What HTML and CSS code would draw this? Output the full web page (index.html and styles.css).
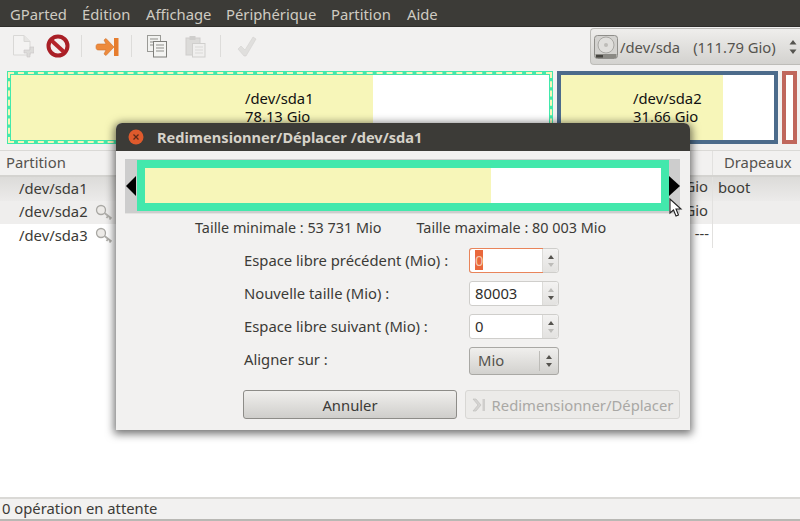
FILE: index.html
```html
<!DOCTYPE html>
<html lang="fr">
<head>
<meta charset="utf-8">
<title>GParted</title>
<link rel="stylesheet" href="styles.css">
</head>
<body>
<div class="app">
  <nav class="menubar">
    <span class="m1">GParted</span><span class="m2">Édition</span><span class="m3">Affichage</span><span class="m4">Périphérique</span><span class="m5">Partition</span><span class="m6">Aide</span>
  </nav>
  <div class="toolbar">
    <div class="tools">
      <svg class="tool t-new" width="22" height="26" viewBox="0 0 22 26"><path d="M1.500 1.500H12L18 7.500V21H1.500Z" fill="#f4f3f2" stroke="#d9d8d6"/><path d="M12 1.500V7.500H18" fill="#e6e5e3" stroke="#d9d8d6"/><path d="M15 16h3v-3h4v3h0v3h-4v4h-3v-4h-3v-3z" fill="#dddcda" stroke="#c9c8c6" stroke-width=".6"/></svg>
      <svg class="tool t-del" width="24" height="24" viewBox="0 0 24 24"><circle cx="12" cy="12" r="9.500" fill="#f3eeee" stroke="#a91f26" stroke-width="4"/><path d="M5.500 6.500L18 18" stroke="#b5232a" stroke-width="4"/></svg>
      <i class="sep s1"></i>
      <svg class="tool t-res" width="24" height="20" viewBox="0 0 24 20"><path d="M1 10C1 7.500 2 7 4 7H11L9 3 11 1.500l8 8.500-8 8.500L9 17l2-4H4C2 13 1 12.500 1 10Z" fill="#ed8a3c" stroke="#d0702a" stroke-width=".6"/><rect x="19" y="1" width="4.500" height="18" fill="#e67d2e"/></svg>
      <i class="sep s2"></i>
      <svg class="tool t-copy" width="22" height="24" viewBox="0 0 22 24"><rect x="1.500" y="1.500" width="13" height="16" fill="#f2f2f0" stroke="#9a9a96"/><path d="M4 5h8M4 8h8M4 11h8" stroke="#8f8f8b"/><rect x="7.500" y="7.500" width="13" height="15.500" fill="#f4f4f2" stroke="#7f7f7b"/><path d="M10 11h8M10 14h8M10 17h8" stroke="#8f8f8b"/></svg>
      <svg class="tool t-paste" width="21" height="23" viewBox="0 0 21 23"><rect x="1" y="3" width="14" height="17" fill="#dcdbd9" stroke="#cfcecc"/><rect x="4.500" y="1" width="6" height="4" fill="#cfcecc"/><rect x="7.500" y="8.500" width="12.500" height="13.500" fill="#f0efee" stroke="#d0cfcd"/><path d="M10 12h8M10 15h8M10 18h8" stroke="#dad9d7"/></svg>
      <i class="sep s3"></i>
      <svg class="tool t-ok" width="20" height="22" viewBox="0 0 20 22"><path d="M1 13l3-3 4 4L16 1l3 2-10 17h-2z" fill="#e0dfdd" stroke="#d3d2d0" stroke-width=".6"/></svg>
    </div>
    <div class="disk">
      <svg width="26" height="26" viewBox="0 0 26 26"><rect x="1.500" y="1.500" width="23" height="23" rx="3" fill="#d3d2cf" stroke="#8f8e8a"/><circle cx="13" cy="11" r="8" fill="#e0dfdc" stroke="#a9a8a4"/><circle cx="13" cy="11" r="2" fill="#bdbcb8"/><path d="M2.500 20H23.500V23a1 1 0 0 1-1 1H3.500a1 1 0 0 1-1-1Z" fill="#8a8984"/><rect x="3" y="21" width="7" height="2.500" fill="#45443f"/></svg>
      <span class="disk-name">/dev/sda</span><span class="disk-size">(111.79 Gio)</span>
      <svg class="updown" width="8" height="16" viewBox="0 0 8 16"><path d="M4 1L7.500 5.500H.5ZM4 15L.5 10.500H7.500Z" fill="#55544f"/></svg>
    </div>
  </div>
  <div class="graph">
    <div class="part p1"><div class="used u1"></div><div class="plabel l1">/dev/sda1<br>78.13 Gio</div></div>
    <div class="part p2"><div class="used u2"></div><div class="plabel l2">/dev/sda2<br>31.66 Gio</div></div>
    <div class="part p3"></div>
  </div>
  <div class="table">
    <div class="row head"><span class="c1">Partition</span><span class="c2"></span><span class="c3">Drapeaux</span></div>
    <div class="row sel"><span class="c1 in">/dev/sda1</span><span class="c2">Gio</span><span class="c3">boot</span></div>
    <div class="row alt"><span class="c1 in">/dev/sda2<svg class="key" width="18" height="17" viewBox="0 0 18 17"><circle cx="6" cy="6" r="4.500" fill="#eceae7" stroke="#a9a8a4" stroke-width="1.300"/><path d="M9.500 9l7 5.500M13 12l-1.500 2M15.500 14l-1 1.500" stroke="#b0afab" stroke-width="1.800" fill="none"/></svg></span><span class="c2">Gio</span><span class="c3"></span></div>
    <div class="row"><span class="c1 in">/dev/sda3<svg class="key" width="18" height="17" viewBox="0 0 18 17"><circle cx="6" cy="6" r="4.500" fill="#eceae7" stroke="#a9a8a4" stroke-width="1.300"/><path d="M9.500 9l7 5.500M13 12l-1.500 2M15.500 14l-1 1.500" stroke="#b0afab" stroke-width="1.800" fill="none"/></svg></span><span class="c2 dash">---</span><span class="c3"></span></div>
  </div>
  <footer class="status">0 opération en attente</footer>
</div>

<section class="dialog">
  <header class="titlebar">
    <svg width="16" height="16" viewBox="0 0 16 16"><circle cx="8" cy="8" r="7.500" fill="#df5a2c"/><path d="M5.500 5.500l5 5M10.500 5.500l-5 5" stroke="#5e2a18" stroke-width="1.300"/></svg>
    <span>Redimensionner/Déplacer /dev/sda1</span>
  </header>
  <div class="resizer">
    <i class="handle left"></i>
    <div class="frame"><div class="frame-used"></div></div>
    <i class="handle right"></i>
  </div>
  <div class="limits"><span>Taille minimale : 53 731 Mio</span><span>Taille maximale : 80 003 Mio</span></div>
  <div class="form">
    <label>Espace libre précédent (Mio) :</label>
    <div class="spin focus"><span class="val"><mark>0</mark></span><span class="arrows"><b class="up"></b><b class="down off"></b></span></div>
    <label>Nouvelle taille (Mio) :</label>
    <div class="spin"><span class="val">80003</span><span class="arrows"><b class="up off"></b><b class="down"></b></span></div>
    <label>Espace libre suivant (Mio) :</label>
    <div class="spin"><span class="val">0</span><span class="arrows"><b class="up"></b><b class="down off"></b></span></div>
    <label>Aligner sur :</label>
    <div class="select"><span class="val">Mio</span><span class="arrows"><b class="up dark"></b><b class="down dark"></b></span></div>
  </div>
  <div class="buttons">
    <button class="btn" type="button">Annuler</button>
    <button class="btn off" type="button"><svg width="14" height="14" viewBox="0 0 14 14"><path d="M1 1l5 6-5 6h3l5-6-5-6z" fill="#d5d4d2" stroke="#bdbcba" stroke-width=".6"/><rect x="10.500" y="1" width="2.500" height="12" fill="#cfcecc"/></svg>Redimensionner/Déplacer</button>
  </div>
</section>
<svg class="cursor" width="14" height="20" viewBox="0 0 14 20"><path d="M1 1v14l3.500-3 2.500 6 2.500-1-2.500-6h5z" fill="#fff" stroke="#222" stroke-width="1.100"/></svg>
</body>
</html>
```

FILE: styles.css
```css
* { box-sizing: border-box; }
html, body { margin: 0; height: 100%; }
body {
  width: 800px; height: 521px; overflow: hidden; position: relative;
  background: #fff; color: #3c3b37;
  font: 14.800px/18px "Noto Sans", "Open Sans", sans-serif;
}
.app { display: flex; flex-direction: column; height: 521px; }

.menubar { height: 27px; flex: none; display: flex; align-items: center; padding: 2px 0 0 10px; background: #3c3b37; color: #cfcbc2; border-bottom: 1px solid #2f2e2b; }
.menubar span { display: block; }
.m1 { width: 72px; } .m2 { width: 64px; } .m3 { width: 80px; } .m4 { width: 105px; } .m5 { width: 76px; }

.toolbar { height: 44px; flex: none; display: flex; justify-content: space-between; background: #f2f1f0; }
.tools { display: flex; align-items: flex-start; padding: 7px 0 0 12px; }
.tool { flex: none; display: block; }
.t-new { margin-right: 12px; }
.t-del { margin-right: 11px; }
.sep { display: block; width: 1px; height: 22px; background: #dddcda; margin-top: 1px; }
.s1 { margin-right: 13px; }
.t-res { margin-top: 3px; margin-right: 12px; }
.s2 { margin-right: 14px; }
.t-copy { margin-right: 17px; }
.t-paste { margin-right: 14px; margin-top: 1px; }
.s3 { margin-right: 16px; }
.t-ok { margin-top: 2px; }

.disk { width: 210px; height: 37px; margin-top: 1px; display: flex; align-items: center; padding: 0 0 0 2px; gap: 1px; border: 1px solid #bdbcb8; border-right: 0; border-radius: 4px 0 0 4px; background: linear-gradient(#efeeec, #d3d2cf); color: #55534e; }
.disk-size { margin-left: 12px; }
.updown { margin-left: 12px; }

.graph { height: 79px; flex: none; display: flex; align-items: flex-start; padding: 0 3px 0 7px; gap: 4px; background: #f2f1f0; color: #111; }
.part { position: relative; height: 73px; background: #fff; display: flex; }
.p1 { width: 546px; border: 4px solid #43e8ac; outline: 2px dashed #f7f6b9; outline-offset: -3px; }
.p2 { width: 221px; border: 4px solid #4c6b8b; }
.p3 { width: 15px; border: 4px solid #c0675c; }
.used { background: #f7f6b9; height: 100%; }
.u1 { width: 362px; }
.u2 { width: 162px; }
.plabel { position: absolute; top: 14px; line-height: 18px; }
.l1 { left: 234px; }
.l2 { left: 72px; }

.table { flex: 1; background: #fff; border-top: 1px solid #dad9d6; min-height: 0; }
.row { display: grid; grid-template-columns: 712px 1fr; height: 24px; align-items: center; position: relative; }
.row .c2 { position: absolute; right: 92px; top: 0; }
.row .c1 { padding: 0 0 3px 19px; display: flex; align-items: center; gap: 7px; }
.row .c3 { padding-left: 5px; height: 100%; border-left: 1px solid #e2e1df; line-height: 21px; }
.head { height: 26px; background: #f2f1f0; border-bottom: 2px solid #d4d3d0; color: #55534e; }
.row.head .c1 { padding: 0 0 2px 6px; }
.row.head .c3 { padding-left: 11px; line-height: 22px; }
.sel { background: linear-gradient(#dcdbd9, #ecebea); }
.alt { background: #efeeed; height: 23px; }
.key { flex: none; margin-top: 2px; }
.dash { right: 91px !important; }

.status { height: 24px; flex: none; background: #f2f1f0; border-top: 2px solid #dad9d6; border-bottom: 2px solid #b9b8b4; padding-left: 2px; line-height: 18px; }

.dialog { position: absolute; left: 116px; top: 123px; width: 574px; height: 307px; background: #f2f1f0; border-radius: 6px 6px 0 0; box-shadow: 0 2px 9px 2px rgba(0,0,0,.55); display: flex; flex-direction: column; }
.titlebar { height: 28px; flex: none; display: flex; align-items: center; gap: 13px; padding: 0 0 1px 12px; background: #3c3b37; border-radius: 6px 6px 0 0; color: #d6d2c9; font-weight: 700; font-size: 14.600px; }

.resizer { margin: 8px 10px 0 9px; height: 54px; background: #cdcdcd; display: flex; align-items: center; justify-content: space-between; box-shadow: 0 1px 0 #e4e3e1; padding: 0 0 0 1px; position: relative; }
.frame { position: absolute; left: 12px; width: 532px; top: 1px; height: 51px; border: 8px solid #43e8ac; background: #fff; }
.frame-used { width: 346px; height: 100%; background: #f7f6b9; }
.handle { display: block; width: 0; height: 0; border-top: 10px solid transparent; border-bottom: 10px solid transparent; position: relative; z-index: 1; }
.handle.left { border-right: 10px solid #000; }
.handle.right { border-left: 11px solid #000; }

.limits { display: flex; justify-content: flex-start; gap: 35px; padding: 6px 0 0 79px; height: 35px; font-size: 14.400px; }

.form { display: grid; grid-template-columns: 225px 90px; grid-auto-rows: 25px; row-gap: 8px; padding-left: 128px; align-items: center; }
.form label { padding-bottom: 2px; }
.spin, .select { height: 25px; width: 90px; display: flex; border: 1px solid #cfcecb; border-radius: 3px; background: #fff; }
.spin .val { flex: 1; padding-left: 5px; line-height: 22px; color: #2f2e2b; }
.spin.focus .val { box-shadow: 0 0 0 1px #e9845a; border-radius: 2px 0 0 2px; }
mark { background: #e9683c; color: #f5c9b0; }
.arrows { width: 16px; flex: none; display: flex; flex-direction: column; align-items: center; justify-content: center; gap: 4px; background: linear-gradient(#f3f2f1, #e3e2e0); border-left: 1px solid #dcdbd8; border-radius: 0 3px 3px 0; }
.arrows b { display: block; width: 0; height: 0; border-left: 3px solid transparent; border-right: 3px solid transparent; }
.arrows .up { border-bottom: 4px solid #55534e; }
.arrows .down { border-top: 4px solid #55534e; }
.arrows .up.off { border-bottom-color: #bdbcb9; }
.arrows .down.off { border-top-color: #bdbcb9; }
.select { height: 28px; margin-top: 2px; background: linear-gradient(#f0efed, #d2d1ce); border-color: #a9a8a4; color: #55534e; }
.select .val { flex: 1; padding-left: 8px; line-height: 25px; }
.select .arrows { background: none; width: 19px; border-left: 1px solid #bdbcb8; margin: 3px 0; }

.buttons { display: flex; gap: 8px; padding: 18px 0 0 127px; }
.btn { font: inherit; width: 214px; height: 29px; border: 1px solid #8d8c88; border-radius: 3px; background: linear-gradient(#f0efed, #cfcecb); color: #3c3b37; padding: 0 0 0 0; display: flex; align-items: center; justify-content: center; gap: 6px; }
.btn.off { width: 215px; border-color: #d8d7d4; background: #ecebe9; color: #a9a8a5; }

.cursor { position: absolute; left: 669px; top: 198px; }
```
